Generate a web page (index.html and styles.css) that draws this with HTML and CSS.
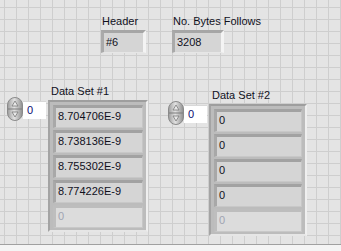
FILE: index.html
```html
<!DOCTYPE html>
<html lang="en">
<head>
    <meta charset="UTF-8">
    <title>Front Panel</title>
    <link rel="stylesheet" href="styles.css">
</head>
<body>
    <div class="panel">
        <div class="top-row">
            <div class="control header-ctl">
                <div class="label">Header</div>
                <div class="indicator">#6</div>
            </div>
            <div class="control bytes-ctl">
                <div class="label">No. Bytes Follows</div>
                <div class="indicator">3208</div>
            </div>
        </div>

        <div class="bottom-row">
            <div class="array-ctl set1">
                <div class="index">
                    <svg class="spin" width="16" height="24" viewBox="0 0 16 24">
                        <defs>
                            <linearGradient id="sg1" x1="0" y1="0" x2="1" y2="0">
                                <stop offset="0" stop-color="#9c9c9c"/>
                                <stop offset="0.45" stop-color="#e2e2e2"/>
                                <stop offset="1" stop-color="#8e8e8e"/>
                            </linearGradient>
                        </defs>
                        <rect x="0.5" y="0.5" width="15" height="23" rx="7.5" fill="url(#sg1)" stroke="#8a8a8a"/>
                        <line x1="1" y1="12" x2="15" y2="12" stroke="#7c7c7c"/>
                        <path d="M8 4 L11 9 L5 9 Z" fill="#e8e8e8" stroke="#7a7a7a" stroke-width="0.8"/>
                        <path d="M8 20 L11 15 L5 15 Z" fill="#e8e8e8" stroke="#7a7a7a" stroke-width="0.8"/>
                    </svg>
                    <div class="index-box">0</div>
                </div>
                <div class="array-col">
                    <div class="label">Data Set #1</div>
                    <div class="array">
                        <div class="cell">8.704706E-9</div>
                        <div class="cell">8.738136E-9</div>
                        <div class="cell">8.755302E-9</div>
                        <div class="cell">8.774226E-9</div>
                        <div class="cell off">0</div>
                    </div>
                </div>
            </div>

            <div class="array-ctl set2">
                <div class="index">
                    <svg class="spin" width="16" height="24" viewBox="0 0 16 24">
                        <defs>
                            <linearGradient id="sg2" x1="0" y1="0" x2="1" y2="0">
                                <stop offset="0" stop-color="#9c9c9c"/>
                                <stop offset="0.45" stop-color="#e2e2e2"/>
                                <stop offset="1" stop-color="#8e8e8e"/>
                            </linearGradient>
                        </defs>
                        <rect x="0.5" y="0.5" width="15" height="23" rx="7.5" fill="url(#sg2)" stroke="#8a8a8a"/>
                        <line x1="1" y1="12" x2="15" y2="12" stroke="#7c7c7c"/>
                        <path d="M8 4 L11 9 L5 9 Z" fill="#e8e8e8" stroke="#7a7a7a" stroke-width="0.8"/>
                        <path d="M8 20 L11 15 L5 15 Z" fill="#e8e8e8" stroke="#7a7a7a" stroke-width="0.8"/>
                    </svg>
                    <div class="index-box">0</div>
                </div>
                <div class="array-col">
                    <div class="label">Data Set #2</div>
                    <div class="array">
                        <div class="cell">0</div>
                        <div class="cell">0</div>
                        <div class="cell">0</div>
                        <div class="cell">0</div>
                        <div class="cell off">0</div>
                    </div>
                </div>
            </div>
        </div>
    </div>
    <div class="status"></div>
</body>
</html>
```

FILE: styles.css
```css
body {
    margin: 0;
    padding: 0;
    font-family: "Liberation Sans", Arial, sans-serif;
    font-size: 11px;
    color: #10101c;
    background: #f0f0f0;
    overflow: hidden;
}
.panel {
    height: 245px;
    box-sizing: border-box;
    background-color: #e4e4e4;
    background-image:
        linear-gradient(to right, #cecece 1px, transparent 1px),
        linear-gradient(to bottom, #cecece 1px, transparent 1px);
    background-size: 12px 12px;
    background-position: 4px 7px;
    border-bottom: 1px solid #a0a0a0;
    padding-top: 15px;
}
.label {
    line-height: 13px;
    white-space: nowrap;
    margin-bottom: 2px;
}
.top-row {
    display: flex;
    padding-left: 101px;
    gap: 26px;
}
.control {
    display: flex;
    flex-direction: column;
}
.header-ctl .label {
    padding-left: 1px;
}
.bytes-ctl .label {
    padding-left: 1px;
}
.indicator {
    box-sizing: border-box;
    height: 23px;
    line-height: 19px;
    padding-left: 2px;
    background: #d5d5d5;
    border-top: 3px solid #a6a6a6;
    border-left: 3px solid #aaaaaa;
    border-right: 3px solid #f4f4f4;
    border-bottom: 1px solid #e6e6e6;
}
.header-ctl .indicator {
    width: 45px;
}
.bytes-ctl .indicator {
    width: 52px;
}
.bottom-row {
    display: flex;
    align-items: flex-start;
    margin-top: 32px;
    padding-left: 7px;
    gap: 20px;
}
.array-ctl {
    display: flex;
    align-items: flex-start;
    gap: 2px;
}
.set2 {
    margin-top: 4px;
}
.index {
    display: flex;
    align-items: flex-start;
    margin-top: 12px;
}
.spin {
    display: block;
}
.index-box {
    box-sizing: border-box;
    width: 23px;
    height: 18px;
    margin-top: 4px;
    padding-left: 4px;
    line-height: 17px;
    background: #ffffff;
    border-top: 1px solid #d8d8d8;
    color: #0a0a70;
}
.array-col {
    display: flex;
    flex-direction: column;
}
.array-col .label {
    padding-left: 3px;
}
.array {
    display: flex;
    flex-direction: column;
    gap: 2px;
    width: 100px;
    box-sizing: border-box;
    padding: 3px 3px 2px 3px;
    background: #bcbcbc;
    border-top: 2px solid #9e9e9e;
    border-left: 2px solid #a4a4a4;
    border-right: 2px solid #efefef;
    border-bottom: 2px solid #e6e6e6;
}
.set2 .array {
    width: 98px;
}
.cell {
    box-sizing: border-box;
    height: 23px;
    line-height: 17px;
    padding-left: 2px;
    background: #d5d5d5;
    border-top: 3px solid #a2a2a2;
    border-left: 3px solid #a8a8a8;
    border-right: 1px solid #c6c6c6;
    border-bottom: 1px solid #c8c8c8;
}
.cell.off {
    background: #dcdcdc;
    border-top-color: #bdbdbd;
    border-left-color: #bebebe;
    color: #a0a4b2;
}
.status {
    height: 6px;
    background: #f4f4f4;
}
```
